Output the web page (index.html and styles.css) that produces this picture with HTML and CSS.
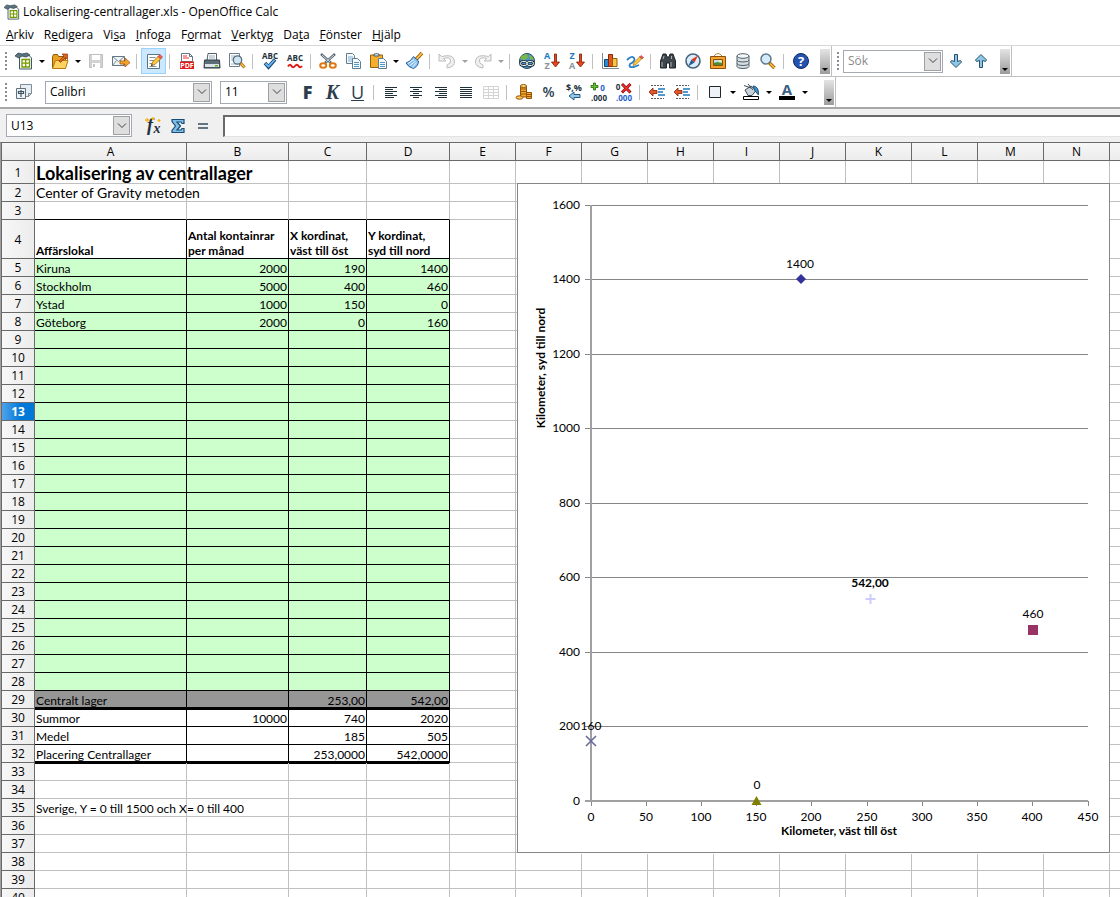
FILE: index.html
```html
<!DOCTYPE html>
<html lang="sv">
<head>
<meta charset="utf-8">
<title>Lokalisering-centrallager.xls - OpenOffice Calc</title>
<link rel="stylesheet" href="styles.css">
</head>
<body>
<header class="titlebar">
  <svg class="appicon" viewBox="0 0 18 18"><path d="M4.500 3h9l3 3v11h-12z" fill="#f4f8fa" stroke="#3d5a66"/><path d="M0 4l3-3 4 1 5-1 3 2-4 2-4-1-3 2z" fill="#5b7380" stroke="#33474f" stroke-width=".8"/><path d="M7 7.500h7.500V15H7zM7 11.200h7.500M10.700 7.500V15" fill="#fff" stroke="#7a9a00" stroke-width="1.300"/></svg>
  <span>Lokalisering-centrallager.xls - OpenOffice Calc</span>
</header>
<nav class="menubar">
  <button><u>A</u>rkiv</button><button>R<u>e</u>digera</button><button>Vi<u>s</u>a</button><button><u>I</u>nfoga</button><button>F<u>o</u>rmat</button><button><u>V</u>erktyg</button><button>Da<u>t</u>a</button><button><u>F</u>önster</button><button><u>H</u>jälp</button>
</nav>

<div class="toolbar">
  <span class="grip"></span>
  <button class="tool" aria-label="Nytt"><svg viewBox="0 0 18 18"><path d="M4.500 3h9l3 3v11h-12z" fill="#f4f8fa" stroke="#3d5a66"/><path d="M0 4l3-3 4 1 5-1 3 2-4 2-4-1-3 2z" fill="#5b7380" stroke="#33474f" stroke-width=".8"/><path d="M7 7.500h7.500V15H7zM7 11.200h7.500M10.700 7.500V15" fill="#fff" stroke="#7a9a00" stroke-width="1.300"/></svg></button>
  <button class="drop" aria-label="Nytt, val"></button>
  <button class="tool" aria-label="Öppna"><svg viewBox="0 0 18 18"><path d="M1.500 16V4.500l1-2h4l1 2h7V16z" fill="#e9a01c" stroke="#8a5a10"/><path d="M1.500 16.500l3-8H17l-2.500 8z" fill="#ffd45e" stroke="#b87a14"/><path d="M8 9l5-5-2-2h5.500v5.500l-2-2-5 5z" fill="#e0641c" stroke="#8c2e0a" stroke-width=".7"/></svg></button>
  <button class="drop" aria-label="Öppna, val"></button>
  <button class="tool" aria-label="Spara"><svg viewBox="0 0 18 18"><path d="M2.500 2.500h13v13h-13z" fill="#d2d2d2" stroke="#c0c0c0"/><path d="M5 3h8v5H5zM5 11h8v5H5z" fill="#fff"/><path d="M6 12h2v3H6z" fill="#c4c4c4"/></svg></button>
  <button class="tool" aria-label="Dokument som e-post"><svg viewBox="0 0 18 18"><path d="M.5 4.500h12v9H.5z" fill="#eef3f6" stroke="#667884"/><path d="M.5 4.500l6 5 6-5M.5 13.500l4-5M12 13l-4-5" fill="none" stroke="#667884" stroke-width=".8"/><path d="M8 9h5V6l5 4.500-5 4.500v-3H8z" fill="#f5a52a" stroke="#a45a10" stroke-width=".8"/></svg></button>
  <span class="sep"></span>
  <button class="tool on" aria-label="Redigera fil"><svg viewBox="0 0 18 18"><path d="M2.500 2.500h12v14h-12z" fill="#fff" stroke="#5b7482"/><path d="M4.500 5.500h6m-6 3h5m-5 3h4m-4 3h7" stroke="#7a92a0"/><path d="M6.500 13.500l1-3.500 6-6 2.500 2.500-6 6z" fill="#ffc93c" stroke="#98661b" stroke-width=".8"/><path d="M13 4.500l2-2 2.500 2.500-2 2z" fill="#ef5a5a" stroke="#a33" stroke-width=".6"/><path d="M6 14l.7-2 1.300 1.300z" fill="#222"/></svg></button>
  <span class="sep"></span>
  <button class="tool" aria-label="Exportera som PDF"><svg viewBox="0 0 18 18"><path d="M3.500 1.500h8l3 3v5h-11z" fill="#fff" stroke="#607987"/><path d="M11.500 1.500v3h3" fill="none" stroke="#607987"/><path d="M5 4h4M5 6h6" stroke="#e33"/><path d="M2 9.500h14V17H2z" fill="#e11b1b"/><text x="9" y="16" class="pdf">PDF</text></svg></button>
  <button class="tool" aria-label="Skriv ut"><svg viewBox="0 0 18 18"><path d="M5 1.500h8.500v7H4z" fill="#fff" stroke="#50616c"/><path d="M6 4h6M6 6h6" stroke="#9ab"/><path d="M1.500 8h15l.5 8H1z" fill="#5d6d78" stroke="#2f3c45"/><path d="M2 12h14v3H2z" fill="#dde3e7"/><path d="M12 13h3v1.500h-3z" fill="#58b520"/></svg></button>
  <button class="tool" aria-label="Förhandsgranska"><svg viewBox="0 0 18 18"><path d="M1.500 1.500h10v13h-10z" fill="#fff" stroke="#6b818d"/><path d="M3 4h4M3 6h3M3 8h3M3 12h5" stroke="#a9bac4"/><circle cx="9.500" cy="8" r="4.200" fill="#cde5f5" stroke="#536c7c" stroke-width="1.300"/><path d="M12.500 11l4 4.500" stroke="#9a6212" stroke-width="3"/><path d="M13 11.500l3.500 4" stroke="#ffc342" stroke-width="1.500"/></svg></button>
  <span class="sep"></span>
  <button class="tool" aria-label="Rättstavning"><svg viewBox="0 0 18 18"><text x="9" y="7" class="abc">ABC</text><path d="M4 11l3.500 4L14 7.500" fill="none" stroke="#174c7d" stroke-width="3.500"/><path d="M4.500 11.500l3 3L13.500 8" fill="none" stroke="#6cb8ef" stroke-width="1.800"/></svg></button>
  <button class="tool" aria-label="Automatisk rättstavning"><svg viewBox="0 0 18 18"><text x="9" y="9" class="abc">ABC</text><path d="M2 14.500q2-3 3.500-.5t3.500 0 3.500 0T16 14" fill="none" stroke="#dc1c16" stroke-width="2"/></svg></button>
  <span class="sep"></span>
  <button class="tool" aria-label="Klipp ut"><svg viewBox="0 0 18 18"><path d="M2 2l10 9M16 2L6 11" stroke="#55666f" stroke-width="2.400"/><path d="M3 3l8 7M15 3l-8 7" stroke="#dfe8ec" stroke-width=".9"/><ellipse cx="4.200" cy="13.500" rx="3" ry="2.300" fill="#fff" stroke="#e07812" stroke-width="2"/><ellipse cx="13.800" cy="13.500" rx="3" ry="2.300" fill="#fff" stroke="#e07812" stroke-width="2"/></svg></button>
  <button class="tool" aria-label="Kopiera"><svg viewBox="0 0 18 18"><path d="M2.500 1.500h6l2 2v8h-8z" fill="#f4f9fc" stroke="#607c8d"/><path d="M4 5h5M4 7h5M4 9h5" stroke="#7eb0d0"/><path d="M8.500 6.500h5l3 3v7h-8z" fill="#f4f9fc" stroke="#607c8d"/><path d="M10 10.500h5m-5 2h5m-5 2h5" stroke="#4e9bcb"/></svg></button>
  <button class="tool" aria-label="Klistra in"><svg viewBox="0 0 18 18"><path d="M1.500 3h12v12.500h-12z" fill="#f6ae2e" stroke="#96610f"/><path d="M5 4V2h1.500l1-1 1 1H10v2z" fill="#dfe6e9" stroke="#485760"/><path d="M9.500 6.500h5l3 3v7h-8z" fill="#f4f9fc" stroke="#607c8d"/><path d="M11 10.500h5m-5 2h5m-5 2h5" stroke="#4e9bcb"/></svg></button>
  <button class="drop" aria-label="Klistra in, val"></button>
  <button class="tool" aria-label="Formatpensel"><svg viewBox="0 0 18 18"><path d="M17 1l-6 6.500" stroke="#9c6513" stroke-width="3.600"/><path d="M17 1l-6 6.500" stroke="#ffc34a" stroke-width="1.800"/><path d="M8.500 4.500l5 4.500q0 5-5 7.500-5-1-7.500-5.500 4.500-1 7.500-6.500z" fill="#86c0ee" stroke="#265f98"/><path d="M3 11.500l6-4m-4 6l5.500-4.500m-3 6.500l4-5" stroke="#eaf6ff"/></svg></button>
  <span class="sep"></span>
  <button class="tool" aria-label="Ångra" disabled><svg viewBox="0 0 18 18"><path d="M1 2v7h7L5.500 6.500q6-2 7 1.500t-3.500 5v3q8-1 7.500-7-1-7.500-13-4.500z" fill="#f0f0f0" stroke="#bcbcbc"/></svg></button>
  <button class="drop off" aria-label="Ångra, val" disabled></button>
  <button class="tool" aria-label="Gör om" disabled><svg viewBox="0 0 18 18"><path d="M17 2v7h-7l2.500-2.500q-6-2-7 1.500t3.500 5v3Q1 15 1.500 9q1-7.500 13-4.500z" fill="#f0f0f0" stroke="#bcbcbc"/></svg></button>
  <button class="drop off" aria-label="Gör om, val" disabled></button>
  <span class="sep"></span>
  <button class="tool" aria-label="Hyperlänk"><svg viewBox="0 0 18 18"><circle cx="9" cy="9" r="7.500" fill="#4f94c4" stroke="#25465c"/><path d="M3 4.500q3-3 6-2.500l1 3-3 3-5-1zM11 3q4 1 5 5l-4-1z" fill="#7ab648"/><rect x="2.500" y="9.500" width="6.500" height="4" rx="2" fill="none" stroke="#20343f" stroke-width="2.600"/><rect x="9" y="9.500" width="6.500" height="4" rx="2" fill="none" stroke="#20343f" stroke-width="2.600"/><rect x="2.500" y="9.500" width="6.500" height="4" rx="2" fill="none" stroke="#e8eef0"/><rect x="9" y="9.500" width="6.500" height="4" rx="2" fill="none" stroke="#e8eef0"/></svg></button>
  <button class="tool" aria-label="Sortera stigande"><svg viewBox="0 0 18 18"><text x="4" y="7" class="sort blue">A</text><text x="4" y="17" class="sort gray">Z</text><path d="M11.500 2h2v8h3L12.500 15 8.500 10h3z" fill="#e5471c" stroke="#7d1d08" stroke-width=".8"/></svg></button>
  <button class="tool" aria-label="Sortera fallande"><svg viewBox="0 0 18 18"><text x="4" y="7" class="sort blue">Z</text><text x="4" y="17" class="sort gray">A</text><path d="M11.500 2h2v8h3L12.500 15 8.500 10h3z" fill="#e5471c" stroke="#7d1d08" stroke-width=".8"/></svg></button>
  <span class="sep"></span>
  <button class="tool" aria-label="Diagram"><svg viewBox="0 0 18 18"><path d="M1.500 1v15.500H18" fill="none" stroke="#7b8b94"/><path d="M3.500 7.500h4v7h-4z" fill="#2b8ad0" stroke="#0d4a7c"/><path d="M7.500 2.500h4v12h-4z" fill="#e2561f" stroke="#8b2706"/><path d="M11.500 6.500h4.500v8h-4.500z" fill="#ffc340" stroke="#8c6008"/></svg></button>
  <button class="tool" aria-label="Ritfunktioner"><svg viewBox="0 0 18 18"><path d="M1 8q5-5 7-2t-4 6q-2 4 4 3l5-2" fill="none" stroke="#2a7fc4" stroke-width="1.800"/><path d="M7 13.500l1-3 6-6 2 2-6 6z" fill="#ffcb45" stroke="#a06d16" stroke-width=".7"/><path d="M13.500 5l1.500-1.500 2.500 2L16 7z" fill="#ee5b5b" stroke="#a33" stroke-width=".6"/></svg></button>
  <span class="sep"></span>
  <button class="tool" aria-label="Sök och ersätt"><svg viewBox="0 0 18 18"><path d="M4 2h3l1 3h2l1-3h3l2.500 7v7h-6v-5h-3v5h-6V9z" fill="#3c464c" stroke="#1d2326"/><path d="M3 10v5M5 4L4 7M12 10v5M12.500 4v3" stroke="#a9b4b9"/></svg></button>
  <button class="tool" aria-label="Navigator"><svg viewBox="0 0 18 18"><circle cx="9" cy="9" r="7" fill="#d9edfa" stroke="#45647c" stroke-width="1.600"/><path d="M14 3.500l-3.500 7-3-3z" fill="#e0391d"/><path d="M4 14.500l3.500-7 3 3z" fill="#235c9a"/></svg></button>
  <button class="tool" aria-label="Galleri"><svg viewBox="0 0 18 18"><path d="M5 4q4-5 8 0" fill="none" stroke="#b38a40"/><path d="M1.500 4.500h15v12h-15z" fill="#f3a32b" stroke="#8b4e0c"/><path d="M4.500 7.500h9v6h-9z" fill="#b6e2f6" stroke="#8b4e0c"/><path d="M5 13v-2l3-1 5 1v2z" fill="#4e8d2c"/><path d="M10 8h2v2h-2z" fill="#fff27a"/></svg></button>
  <button class="tool" aria-label="Datakällor"><svg viewBox="0 0 18 18"><path d="M3 4v10.500q0 2 6 2t6-2V4z" fill="#d7dee2" stroke="#4e5f69"/><ellipse cx="9" cy="4" rx="6" ry="2.300" fill="#f3f6f7" stroke="#4e5f69"/><path d="M3 8q0 2 6 2t6-2M3 11.500q0 2 6 2t6-2" fill="none" stroke="#4e5f69"/></svg></button>
  <button class="tool" aria-label="Zooma"><svg viewBox="0 0 18 18"><circle cx="7" cy="7" r="5" fill="#d4ebf9" stroke="#607887" stroke-width="1.500"/><path d="M10.500 11l5 5" stroke="#95600e" stroke-width="3.400"/><path d="M11 11.500l4.500 4.500" stroke="#ffc23f" stroke-width="1.700"/></svg></button>
  <span class="sep"></span>
  <button class="tool" aria-label="Hjälp"><svg viewBox="0 0 18 18"><circle cx="9" cy="9" r="7.500" fill="#2452ad" stroke="#0d2a67"/><text x="9" y="14" class="help">?</text></svg></button>
  <button class="more" aria-label="Fler knappar"></button>
  <span class="edge"></span>
  <span class="grip"></span>
  <div class="combo search"><input aria-label="Sök" placeholder="Sök"><span class="chev"><svg viewBox="0 0 10 6"><path d="M1 .5l4 4 4-4"/></svg></span></div>
  <button class="tool" aria-label="Sök nästa"><svg viewBox="0 0 18 18"><path d="M7.500 2.500h3v7l3-1 1 1.500L9 15.500 3.500 10l1-1.500 3 1z" fill="#8fc6e6" stroke="#23536f"/></svg></button>
  <button class="tool" aria-label="Sök föregående"><svg viewBox="0 0 18 18"><path d="M7.500 15.500h3v-7l3 1 1-1.500L9 2.500 3.500 8l1 1.500 3-1z" fill="#8fc6e6" stroke="#23536f"/></svg></button>
  <button class="more" aria-label="Fler sökknappar"></button>
  <span class="edge"></span>
</div>

<div class="toolbar second">
  <span class="grip"></span>
  <button class="tool" aria-label="Formatmallar"><svg viewBox="0 0 18 18"><path d="M5.500 1.500h11v9l-3 3h-8z" fill="#e8edf1" stroke="#7b8d98"/><path d="M1.500 5.500h9v10h-9z" fill="#eef2f4" stroke="#5f727e"/><path d="M3.500 8.500h5v2h-5zM6 7v7" fill="none" stroke="#405563" stroke-width="1.200"/><path d="M16.500 10.500h-3v3" fill="none" stroke="#7b8d98"/></svg></button>
  <div class="combo font"><select aria-label="Teckensnitt"><option>Calibri</option></select><span class="chev"><svg viewBox="0 0 10 6"><path d="M1 .5l4 4 4-4"/></svg></span></div>
  <div class="combo size"><select aria-label="Teckenstorlek"><option>11</option></select><span class="chev"><svg viewBox="0 0 10 6"><path d="M1 .5l4 4 4-4"/></svg></span></div>
  <button class="tool letter bold">F</button>
  <button class="tool letter ital">K</button>
  <button class="tool letter under">U</button>
  <span class="sep"></span>
  <button class="tool" aria-label="Vänsterjustera"><svg viewBox="0 0 18 18"><path class="lines" d="M3 4.500h12M3 6.500h8M3 8.500h12M3 10.500h8M3 12.500h12M3 14.500h9"/></svg></button>
  <button class="tool" aria-label="Centrera"><svg viewBox="0 0 18 18"><path class="lines" d="M3 4.500h12M6 6.500h6M3 8.500h12M6 10.500h6M3 12.500h12M6 14.500h6"/></svg></button>
  <button class="tool" aria-label="Högerjustera"><svg viewBox="0 0 18 18"><path class="lines" d="M3 4.500h12M7 6.500h8M3 8.500h12M7 10.500h8M3 12.500h12M6 14.500h9"/></svg></button>
  <button class="tool" aria-label="Marginaljustera"><svg viewBox="0 0 18 18"><path class="lines" d="M3 4.500h12M3 6.500h12M3 8.500h12M3 10.500h12M3 12.500h12M3 14.500h12"/></svg></button>
  <button class="tool" aria-label="Sammanfoga celler" disabled><svg viewBox="0 0 18 18"><path d="M1.500 3.500h15v12h-15zM1.500 6.500h15m-15 3h15m-15 3h15M6.500 3.500v12m5-12v12" fill="none" stroke="#d4d4d4"/></svg></button>
  <span class="sep"></span>
  <button class="tool" aria-label="Valuta"><svg viewBox="0 0 18 18"><path d="M5.500 3v11h6V3z" fill="#f4a72c" stroke="#935408"/><ellipse cx="8.500" cy="3" rx="3" ry="1.500" fill="#ffd879" stroke="#935408"/><path d="M5.500 6h6m-6 2.500h6m-6 2.500h6" stroke="#935408"/><path d="M11.500 9.500v6h5v-6z" fill="#f4a72c" stroke="#935408"/><path d="M11.500 11.500h5m-5 2h5" stroke="#935408"/><ellipse cx="4.500" cy="14.500" rx="3.500" ry="1.700" fill="#ffc75a" stroke="#935408"/></svg></button>
  <button class="tool letter pct">%</button>
  <button class="tool" aria-label="Standardformat"><svg viewBox="0 0 18 18"><text x="9" y="8" class="num wide">$,%</text><path d="M4 13l5-4v2.500h6v3H9V17z" fill="#93c8ea" stroke="#235a83"/></svg></button>
  <button class="tool" aria-label="Lägg till decimal"><svg viewBox="0 0 18 18"><path d="M3.500 0h2v2.500H8v2H5.500V7h-2V4.500H1v-2h2.500z" fill="#62c22c" stroke="#256a08" stroke-width=".8"/><text x="12.500" y="8" class="num azure">0</text><text x="9" y="18" class="num">.000</text></svg></button>
  <button class="tool" aria-label="Ta bort decimal"><svg viewBox="0 0 18 18"><text x="3" y="7" class="num">0</text><text x="9" y="18" class="num azure">.000</text><path d="M7 1l8.500 8.500m0-8.500L7 9.500" stroke="#8a0b0b" stroke-width="3"/><path d="M7.500 1.500l7.500 7.500m0-7.500L7.500 9" stroke="#ee3030" stroke-width="1.700"/></svg></button>
  <span class="sep"></span>
  <button class="tool" aria-label="Minska indrag"><svg viewBox="0 0 18 18"><path d="M3 2.500h13M3 15.500h13" stroke="#51616b" stroke-dasharray="2 1"/><path d="M10 6h7m-7 3h5m-5 3h7" stroke="#1c78ba" stroke-width="1.600"/><path d="M1 9l4-4v2.500h4v3H5V13z" fill="#e5572b" stroke="#812207" stroke-width=".8"/></svg></button>
  <button class="tool" aria-label="Öka indrag"><svg viewBox="0 0 18 18"><path d="M3 2.500h13M3 15.500h13" stroke="#51616b" stroke-dasharray="2 1"/><path d="M10 6h7m-7 3h5m-5 3h7" stroke="#1c78ba" stroke-width="1.600"/><path d="M1 9l4-4v2.500h4v3H5V13z" fill="#e5572b" stroke="#812207" stroke-width=".8"/></svg></button>
  <span class="sep"></span>
  <button class="tool" aria-label="Inramning"><svg viewBox="0 0 18 18"><path d="M3.500 3.500h11v11h-11z" fill="#eef1f6" stroke="#20282e"/></svg></button>
  <button class="drop" aria-label="Inramning, val"></button>
  <button class="tool" aria-label="Bakgrundsfärg"><svg viewBox="0 0 18 18"><path d="M3 7l6-4 5 4.500-4 5H6z" fill="#c8d2d8" stroke="#3e4d56"/><path d="M2 2.500l7 2.500M6 1l5 6" stroke="#3e4d56"/><path d="M11 3q6 0 5.500 9L13 8z" fill="#3c8fc6" stroke="#21587e"/><path d="M1.500 13.500h15v3h-15z" fill="#fff" stroke="#000"/></svg></button>
  <button class="drop" aria-label="Bakgrundsfärg, val"></button>
  <button class="tool" aria-label="Teckenfärg"><svg viewBox="0 0 18 18"><text x="9" y="12" class="color">A</text><path d="M1 13h16v4H1z" fill="#000"/></svg></button>
  <button class="drop" aria-label="Teckenfärg, val"></button>
  <button class="more" aria-label="Fler formatknappar"></button>
  <span class="edge"></span>
</div>

<div class="formula">
  <div class="combo name"><select aria-label="Namnområde"><option>U13</option></select><span class="chev"><svg viewBox="0 0 10 6"><path d="M1 .5l4 4 4-4"/></svg></span></div>
  <button class="tool" aria-label="Funktionsguiden"><svg viewBox="0 0 18 18"><text x="6" y="14" class="fx">f</text><text x="13" y="16" class="fx small">x</text><path d="M3 1v4M1 3h4M9 0v3M7.500 1.500h3M15 2v3M13.500 3.500h3" stroke="#f2b71d" stroke-width="1.300"/></svg></button>
  <button class="tool" aria-label="Summa"><svg viewBox="0 0 18 18"><path d="M3 2.500h12v4h-2l-1-1.500H8L11.500 9 8 13h4l1-1.500h2v4H3v-2L6.500 9 3 4.500z" fill="#7fbfe8" stroke="#174c74" stroke-width="1.200"/></svg></button>
  <button class="tool" aria-label="Funktion"><svg viewBox="0 0 18 18"><path d="M4 7h10M4 11h10" stroke="#34495a" stroke-width="1.700"/></svg></button>
  <input class="entry" aria-label="Inmatningsrad">
</div>

<main class="sheet">
  <table class="grid">
    <colgroup id="cols"></colgroup>
    <thead><tr id="heads"></tr></thead>
    <tbody id="rows"></tbody>
  </table>
  <figure class="chart">
    <svg id="plot" viewBox="517 183 593 671" role="img" aria-label="Kilometer, syd till nord / väst till öst"></svg>
  </figure>
</main>
<script src="script.js"></script>
</body>
</html>
```
FILE: styles.css
```css
* { box-sizing: border-box; }
body {
  margin: 0;
  height: 100vh;
  display: flex;
  flex-direction: column;
  overflow: hidden;
  background: #fff;
  color: #000;
  font: 12px/16px "Open Sans", "Noto Sans", sans-serif;
}
button, input, select { font: inherit; color: inherit; padding: 0; border: 0; background: none; border-radius: 0; margin: 0; }

.titlebar { display: flex; align-items: center; gap: 3px; height: 24px; padding-left: 4px; flex: none; }
.appicon { width: 16px; height: 16px; }
.menubar { display: flex; gap: 10px; height: 22px; padding-left: 6px; border-bottom: 1px solid #d8d8d8; flex: none; }

.toolbar { display: flex; align-items: center; height: 31px; flex: none; border-bottom: 1px solid #c0c0c0; }
.toolbar.second { height: 32px; border-bottom: 2px solid #a8a8a8; }
.grip { width: 2px; height: 18px; margin: 0 4px 0 5px; flex: none; background: repeating-linear-gradient(#8c8c8c 0 2px, transparent 2px 4px); }
.tool { width: 25px; height: 26px; flex: none; display: flex; align-items: center; justify-content: center; }
.tool svg { width: 18px; height: 18px; overflow: visible; }
.tool.on { background: #cce8ff; border: 1px solid #99d1ff; }
.drop { width: 11px; height: 20px; flex: none; display: flex; align-items: center; justify-content: center; }
.drop::before, .more::before { content: ""; border: 3px solid transparent; border-top-color: #000; border-bottom: 0; }
.drop.off::before { border-top-color: #a0a0a0; }
.sep { width: 1px; height: 15px; margin: 0 4px 0 3px; background: #c0c0c0; flex: none; }
.more { width: 10px; height: 25px; margin-left: 7px; padding-bottom: 3px; display: flex; align-items: flex-end; justify-content: center; background: linear-gradient(#e4e4e4, #9c9c9c); }
.second .more { margin-left: 14px; }
.edge { width: 1px; align-self: stretch; margin-left: 1px; background: #c0c0c0; }

.combo { position: relative; display: flex; height: 23px; border: 1px solid #a5a9b3; background: #fff; flex: none; }
.combo select, .combo input { flex: 1; min-width: 0; padding-left: 4px; appearance: none; outline: 0; }
.combo input::placeholder { color: #8a8a8a; opacity: 1; }
.chev { position: absolute; top: 1px; right: 1px; bottom: 1px; width: 17px; display: flex; align-items: center; justify-content: center; border: 1px solid #a0a0a0; background: #dedede; pointer-events: none; }
.chev svg { width: 10px; height: 6px; }
.chev path { fill: none; stroke: #404040; }
.combo.search { width: 100px; }
.combo.font { width: 167px; margin: 0 8px 0 9px; }
.combo.size { width: 67px; margin-right: 8px; }
.combo.name { width: 126px; margin: 0 8px 0 6px; }

.letter { color: #2c3e4e; font-size: 18px; line-height: 24px; }
.bold { font-weight: 800; }
.ital { font-family: "Liberation Serif", serif; font-style: italic; font-weight: 700; font-size: 20px; }
.under { text-decoration: underline; text-decoration-thickness: 1px; }
.pct { font-size: 14px; font-weight: 600; }
.lines { stroke: #20303a; }
.abc, .num, .sort, .help, .fx, .color, .pdf { text-anchor: middle; font-weight: 700; fill: #22313c; }
.abc { font-size: 8px; }
.num { font-size: 8px; }
.num.wide { font-size: 9px; }
.num.azure { fill: #1d5fd0; }
.pdf { font-size: 7px; fill: #fff; }
.sort { font-size: 9px; line-height: 9px; }
.sort.blue { fill: #1f7cc4; }
.sort.gray { fill: #8a949b; }
.help { font-size: 13px; fill: #fff; }
.fx { font-family: "Liberation Serif", serif; font-style: italic; font-size: 18px; }
.fx.small { font-size: 14px; }
.color { font-size: 15px; fill: #3a5f80; }

.formula { display: flex; align-items: center; height: 33px; background: #f0f0f0; flex: none; }
.entry { flex: 1; height: 22px; margin-left: 8px; background: #fff; border: 2px solid #696969; border-right: 0; border-bottom: 1px solid #e3e3e3; }

.sheet { position: relative; flex: 1; min-height: 0; overflow: hidden; border-top: 1px solid #696969; border-left: 1px solid #a0a0a0; }
.grid { table-layout: fixed; width: 1px; border-spacing: 0; }
.grid th, .grid td { padding: 0 1px; border: 0 solid #c0c0c0; border-width: 0 1px 1px 0; white-space: nowrap; height: 18px; line-height: 17px; }
.grid thead th { font-weight: 400; border-color: #696969; background: linear-gradient(#f7f7f7, #ececec); }
.grid tbody th { font-weight: 400; border-color: #696969; background: linear-gradient(90deg, #f7f7f7, #ececec); }
.grid .corner, .grid tbody th { border-left: 1px solid #696969; }
.grid tbody th.current { background: linear-gradient(90deg, #4fa3ea, #0078d7 60%); color: #fff; font-weight: 700; }
.grid td { font-family: Lato, sans-serif; vertical-align: bottom; line-height: 15px; text-align: right; }
.grid td:nth-child(2) { text-align: left; }
.grid tr.tall td { height: 23px; font-size: 18px; font-weight: 700; line-height: 20px; }
.grid tr.subtitle td { font-size: 14px; line-height: 17px; }
.grid tr.headline td { height: 39px; }
.grid tr.headline .boxed { font-weight: 700; text-align: left; white-space: pre-line; }
.grid td.boxed { border-color: #000; }
.grid td.underlined { border-bottom-color: #000; }
.grid td.green { background: #cfc; }
.grid td.dark { background: #969696; }
.grid td.thick { border-bottom-width: 2px; box-shadow: 0 1px #000; line-height: 12px; }

.chart { position: absolute; left: 516px; top: 40px; width: 593px; margin: 0; background: #fff; }
.chart svg { display: block; width: 100%; }
.chart text { font-family: Lato, sans-serif; font-size: 12px; text-anchor: middle; }
.chart .end { text-anchor: end; }
.chart .strong { font-weight: 700; }
.frame, .rules, .axes { fill: none; stroke: #868686; }
.axes { stroke-width: 2; stroke: #a0a0a0; }
```
FILE: script.js
```js
const widths = [34, 152, 102, 78, 83].concat(Array(11).fill(66));
document.getElementById('cols').innerHTML = widths.map(w => `<col style="width:${w}px">`).join('');
document.getElementById('heads').innerHTML = '<th class="corner"></th>' +
  [...'ABCDEFGHIJKLMN'].map(c => `<th scope="col">${c}</th>`).join('') + '<th></th>';

const cells = {
  1: ['Lokalisering av centrallager'],
  2: ['Center of Gravity metoden'],
  4: ['Affärslokal', 'Antal kontainrar\nper månad', 'X kordinat,\nväst till öst', 'Y kordinat,\nsyd till nord'],
  5: ['Kiruna', '2000', '190', '1400'],
  6: ['Stockholm', '5000', '400', '460'],
  7: ['Ystad', '1000', '150', '0'],
  8: ['Göteborg', '2000', '0', '160'],
  29: ['Centralt lager', '', '253,00', '542,00'],
  30: ['Summor', '10000', '740', '2020'],
  31: ['Medel', '', '185', '505'],
  32: ['Placering Centrallager', '', '253,0000', '542,0000'],
  35: ['Sverige, Y = 0 till 1500 och X= 0 till 400']
};
const rowClasses = { 1: 'tall', 2: 'subtitle', 4: 'headline' };

let rows = '';
for (let r = 1; r <= 40; r++) {
  rows += `<tr class="${rowClasses[r] || ''}"><th scope="row"${r === 13 ? ' class="current"' : ''}>${r}</th>`;
  for (let c = 0; c < 15; c++) {
    const names = [];
    if (c < 4) {
      if (r === 3) names.push('underlined');
      if (r >= 4 && r <= 32) names.push('boxed');
      if (r >= 5 && r <= 28) names.push('green');
      if (r === 29) names.push('dark');
      if (r === 29 || r === 32) names.push('thick');
    }
    rows += `<td class="${names.join(' ')}">${(cells[r] && cells[r][c]) || ''}</td>`;
  }
  rows += '</tr>';
}
document.getElementById('rows').innerHTML = rows;

const px = x => Math.floor(591 + x * 497 / 450);
const py = y => Math.floor(801 - y * 596 / 1600);
let plot = '<rect class="frame" x="517.5" y="183.5" width="592" height="669"/>';
for (let y = 0; y <= 1600; y += 200) {
  if (y) plot += `<path class="rules" d="M585 ${py(y) + 0.5}H1088"/>`;
  plot += `<text class="end" x="580" y="${py(y) + 4}">${y}</text>`;
}
for (let x = 0; x <= 450; x += 50) {
  plot += `<path class="rules" d="M${px(x) + 0.5} 801v5"/><text x="${px(x)}" y="821">${x}</text>`;
}
plot += '<path class="axes" d="M591 205V801M585 801H1088"/>' +
  '<path d="M801 274l5 5-5 5-5-5z" fill="#333399"/><text x="800" y="268">1400</text>' +
  '<path d="M1028 625h10v10h-10z" fill="#993366"/><text x="1033" y="618">460</text>' +
  '<path d="M756.5 796l5 9h-10z" fill="#808000"/><text x="757" y="789">0</text>' +
  '<path d="M586 736l10 10m0-10l-10 10" stroke="#666699" stroke-width="1.5"/><text x="591" y="730">160</text>' +
  '<path d="M870.500 594v10m-5-5h10" stroke="#ccccff" stroke-width="2"/><text class="strong" x="870" y="587">542,00</text>' +
  '<text class="strong" x="839" y="835">Kilometer, väst till öst</text>' +
  '<text class="strong" transform="translate(545 368) rotate(-90)">Kilometer, syd till nord</text>';
document.getElementById('plot').innerHTML = plot;
```
